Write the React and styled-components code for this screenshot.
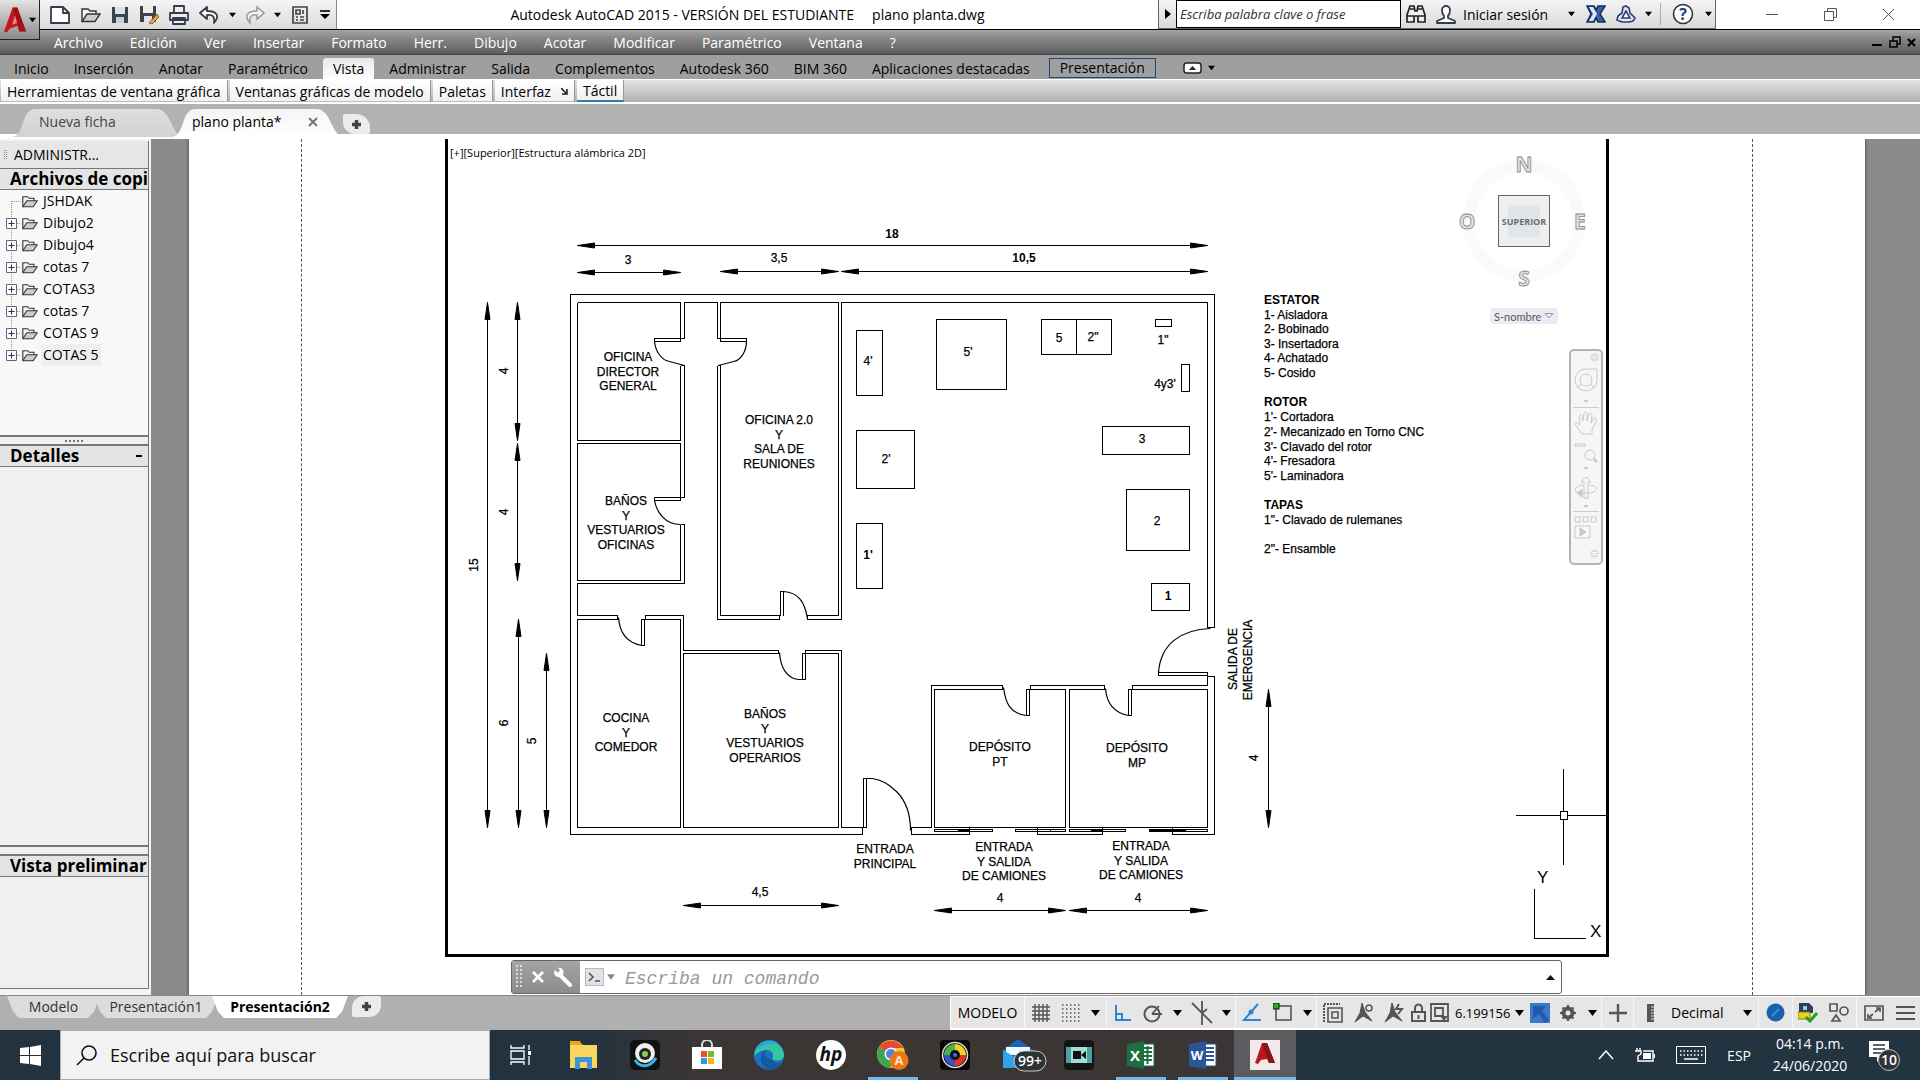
import React from "react";
import styled, { createGlobalStyle } from "styled-components";

const UI = `"Open Sans", "Noto Sans", sans-serif`;

const Global = createGlobalStyle`
  * { box-sizing: border-box; }
  body { margin: 0; font-family: ${UI}; font-size: 14px; color: #000; background: #b1b1b1; }
  button, input, select { font: inherit; color: inherit; margin: 0; padding: 0; border: 0; background: none; }
  svg { display: block; flex: none; }
`;

const Shell = styled.div`
  display: flex;
  flex-direction: column;
  min-height: 100vh;
`;

const Svg = ({ w, h = w, box, children, ...rest }) => (
  <svg width={w} height={h} viewBox={box || `0 0 ${w} ${h}`} fill="none" aria-hidden="true" {...rest}>{children}</svg>
);
const Caret = ({ c = "#000", w = 9 }) => (
  <Svg w={w} h={6} box="0 0 9 6"><path d="M0 0H9L4.500 6Z" fill={c} /></Svg>
);

/* ---------- title bar ---------- */
const TitleBar = styled.header`
  position: relative;
  display: flex;
  height: 30px;
  background: #fff;
  border-bottom: 1px solid #000;
`;
const AppButton = styled.button`
  position: absolute;
  left: 0;
  top: 0;
  z-index: 2;
  width: 40px;
  height: 40px;
  display: flex;
  align-items: center;
  justify-content: center;
  gap: 2px;
  background: linear-gradient(#e4e4e4, #8a8a8a);
  border-right: 1px solid #222;
  border-bottom: 1px solid #222;
`;
const QuickBar = styled.div`
  display: flex;
  align-items: center;
  width: 337px;
  padding-left: 44px;
  background: linear-gradient(#f4f4f4, #dcdcdc);
  border-right: 1px solid #888;
`;
const Tool = styled.button`
  display: flex;
  align-items: center;
  justify-content: center;
  width: ${p => p.$w || 31}px;
  height: 28px;
`;
const Title = styled.h1`
  flex: 1;
  display: flex;
  gap: 18px;
  align-items: center;
  justify-content: center;
  margin: 0;
  font-size: 14px;
  font-weight: 400;
  white-space: nowrap;
`;
const InfoCenter = styled.div`
  display: flex;
  align-items: center;
  background: linear-gradient(#f4f4f4, #dadada);
  border: solid #666;
  border-width: 0 1px 1px;
`;
const SearchInput = styled.input`
  width: 225px;
  height: 28px;
  padding: 0 3px;
  border: 1px solid #000;
  background: #fff;
  font-size: 13px;
  font-style: italic;
  &::placeholder { color: #333; opacity: 1; }
`;
const SignIn = styled.button`
  padding-left: 2px;
  width: 100px;
  text-align: left;
`;
const Divider = styled.span`
  width: 1px;
  height: 22px;
  margin: 0 4px;
  background: #aaa;
`;
const WinButtons = styled.div`
  display: flex;
  width: 204px;
  padding-left: 26px;
`;

/* ---------- menu and ribbon ---------- */
const MenuBar = styled.nav`
  display: flex;
  align-items: center;
  gap: 1px;
  height: 25px;
  padding: 0 2px 0 41px;
  background: linear-gradient(#a4a4a4, #848484 40%, #5c5c5c);
  border-bottom: 1px solid #444;
`;
const MenuItem = styled.button`
  padding: 0 13px;
  color: #fff;
`;
const Push = styled.span`flex: 1;`;
const Tabs = styled.nav`
  display: flex;
  align-items: flex-end;
  gap: 1px;
  height: 24px;
  padding-left: 2px;
  background: #9f9f9f;
`;
const RibbonTab = styled.button`
  height: ${p => (p.$on ? 21 : 20)}px;
  line-height: 20px;
  padding: 0 ${p => (p.$on ? 10 : 12)}px;
  margin: 0 ${p => (p.$on ? 2 : 0)}px;
  border-radius: 3px 3px 0 0;
  background: ${p => (p.$on ? "linear-gradient(#e8e8e8, #fff)" : "none")};
`;
const ContextTab = styled.button`
  height: 20px;
  line-height: 16px;
  padding: 0 10px;
  margin: 0 26px 1px 6px;
  border: 1px solid #1c4a7a;
`;
const Collapse = styled.button`
  display: flex;
  align-items: center;
  gap: 6px;
  height: 22px;
`;
const Ribbon = styled.div`
  display: flex;
  gap: 2px;
  height: 25px;
  padding: 0 1px;
  border-top: 1px solid #fff;
  border-bottom: 2px solid #fff;
  background: linear-gradient(#e4e4e4, #b0b0b0);
`;
const RibbonPanel = styled.button`
  display: flex;
  align-items: center;
  gap: 10px;
  height: 22px;
  padding: 1px 6px 0;
  background: linear-gradient(#fff, #f0f0f0);
  border-right: 1px solid #999;
  border-bottom: ${p => (p.$on ? "2px solid #3b7aa5" : "1px solid #bbb")};
`;
const FileTabs = styled.nav`
  display: flex;
  align-items: flex-end;
  height: 35px;
  padding: 0 0 2px 12px;
  background: linear-gradient(#b2b2b2 30px, #fff 30px);
`;
const FileTab = styled.button`
  position: relative;
  z-index: ${p => (p.$on ? 1 : 0)};
  display: flex;
  align-items: center;
  justify-content: space-between;
  width: 172px;
  height: 28px;
  padding: 0 ${p => (p.$on ? "26px 3px 20px" : "26px 3px 27px")};
  margin-right: -12px;
  color: ${p => (p.$on ? "#000" : "#444")};
  background: ${p => (p.$on ? "linear-gradient(#f4f4f4, #fff)" : "linear-gradient(#dedede, #d2d2d2)")};
  clip-path: path("M0 28C14 26 8 0 24 0H144C160 0 158 26 172 28Z");
`;
const NewTab = styled.button`
  display: flex;
  align-items: center;
  justify-content: center;
  width: 27px;
  height: 20px;
  margin: 0 0 3px 11px;
  background: #ececec;
  border-radius: 2px 14px 2px 12px;
`;

/* ---------- work area ---------- */
const Work = styled.main`
  flex: 1;
  display: flex;
  background: #f4f4f4;
`;
const Side = styled.aside`
  display: flex;
  flex-direction: column;
  width: 149px;
  margin: 2px 2px 6px 0;
  border-right: 1px solid #777;
  border-bottom: 1px solid #777;
  background: #f0f0f0;
`;
const PaletteTitle = styled.div`
  display: flex;
  align-items: center;
  gap: 7px;
  height: 27px;
  padding-left: 4px;
  background: #e6e6e6;
`;
const SideHead = styled.h2`
  display: flex;
  align-items: center;
  justify-content: space-between;
  height: 22px;
  margin: 0;
  padding: 0 0 0 10px;
  border: solid #777;
  border-width: 1px 0;
  background: #e4e4e4;
  font-size: 17px;
  line-height: 20px;
  white-space: nowrap;
`;
const Dash = styled.span`
  width: 6px;
  height: 2px;
  margin-right: 6px;
  background: #000;
`;
const TreeList = styled.ul`
  height: 245px;
  margin: 0;
  padding: 0 0 0 6px;
  list-style: none;
  background: #f8f8f8;
`;
const TreeItem = styled.li`
  display: flex;
  align-items: center;
  height: 22px;
`;
const TreeLabel = styled.span`
  padding: 0 2px;
  margin-left: 3px;
  line-height: 22px;
  background: ${p => (p.$on ? "#efefef" : "none")};
`;
const Splitter = styled.div`
  display: flex;
  align-items: center;
  justify-content: center;
  height: 10px;
  border: solid #777;
  border-width: 2px 0 1px;
`;
const Fill = styled.div`
  flex: ${p => (p.$h ? `0 0 ${p.$h}px` : 1)};
`;
const Canvas = styled.section`
  position: relative;
  flex: 1;
  display: flex;
  padding: 0 55px 0 38px;
  background: #8a8a8a;
`;
const Paper = styled.div`
  flex: 1;
  display: flex;
  padding: 0 112px;
  background: #fff;
  box-shadow: 0 0 3px #333;
  clip-path: inset(0 -4px);
`;
const Margins = styled.div`
  flex: 1;
  display: flex;
  padding: 0 143px 38px;
  border: dashed #555;
  border-width: 0 1px;
`;
const Viewport = styled.div`
  position: relative;
  flex: 1;
  display: flex;
  border: solid #000;
  border-width: 0 3px 3px;
`;
const Plan = styled.svg`
  flex: 1;
  width: 100%;
  height: 100%;
  font-family: "Liberation Sans", Arial, sans-serif;
  font-size: 12px;
`;
const ViewLabel = styled.div`
  position: absolute;
  left: 2px;
  top: 5px;
  display: flex;
  font-size: 11px;
  line-height: 18px;
`;
const ViewCube = styled.div`
  position: absolute;
  right: 12px;
  top: 12px;
  display: flex;
  flex-direction: column;
  align-items: center;
  gap: 17px;
`;
const UcsPick = styled.label`
  display: flex;
  align-items: center;
  width: 68px;
  height: 16px;
  padding: 0 4px;
  border-radius: 4px;
  background: #ebebf5;
  select { appearance: none; width: 50px; font: 11px Lato, sans-serif; color: #555; }
`;
const NavBar = styled.div`
  position: absolute;
  right: 3px;
  top: 210px;
  display: flex;
  flex-direction: column;
  align-items: center;
  width: 34px;
  height: 216px;
  border: 2px solid #b4b4b4;
  border-radius: 5px;
  background: #f6f6f6;
`;
const NavBtn = styled.button`
  display: flex;
  align-items: center;
  justify-content: center;
  width: 26px;
  height: ${p => p.$h}px;
  border-top: ${p => (p.$line ? "1px solid #ccc" : "0")};
`;
const NavEnd = styled(NavBtn)`
  align-self: flex-end;
  width: 14px;
`;
const CommandLine = styled.form`
  position: absolute;
  left: 360px;
  right: 358px;
  bottom: 1px;
  display: flex;
  height: 34px;
  border: 1px solid #666;
  border-radius: 3px;
  background: #fff;
`;
const CommandTools = styled.div`
  display: flex;
  align-items: center;
  gap: 9px;
  width: 68px;
  padding-left: 4px;
  background: linear-gradient(#a4a4a4, #8c8c8c);
`;
const Prompt = styled.button`
  display: flex;
  align-items: center;
  gap: 3px;
  padding: 0 10px 0 5px;
`;
const CommandInput = styled.input`
  flex: 1;
  min-width: 0;
  padding-top: 3px;
  font: italic 18px "Liberation Mono", monospace;
  &::placeholder { color: #999; opacity: 1; }
`;
const History = styled.button`
  width: 22px;
  display: flex;
  align-items: center;
  justify-content: center;
`;

/* ---------- status bar ---------- */
const StatusBar = styled.footer`
  display: flex;
  justify-content: space-between;
  height: 35px;
  background: #b0b0b0;
  border-top: 1px solid #888;
`;
const LayoutTabs = styled.nav`
  display: flex;
  padding-left: 7px;
`;
const LayoutTab = styled.button`
  width: ${p => p.$w}px;
  height: 22px;
  margin-right: -6px;
  line-height: 20px;
  font-size: 14px;
  font-weight: ${p => (p.$on ? 700 : 400)};
  color: ${p => (p.$on ? "#000" : "#333")};
  background: ${p => (p.$on ? "#fff" : "#dcdcdc")};
  clip-path: polygon(0 0, 100% 0, calc(100% - 6px) 70%, calc(100% - 12px) 100%, 12px 100%, 6px 70%);
`;
const AddLayout = styled.button`
  display: flex;
  align-items: center;
  justify-content: center;
  width: 29px;
  height: 21px;
  margin-left: 10px;
  background: #ececec;
  border-radius: 12px 2px 12px 2px;
`;
const StatusTools = styled.div`
  display: flex;
  height: 34px;
  background: #e6e6e6;
  border: solid #fff;
  border-width: 1px 0 2px 1px;
`;
const StatusBtn = styled.button`
  display: flex;
  align-items: center;
  justify-content: center;
  width: ${p => p.$w}px;
  border-right: ${p => (p.$sep ? "1px solid #f6f6f6" : "0")};
`;
const StatusPick = styled.label`
  display: flex;
  align-items: center;
  width: ${p => p.$w}px;
  padding: 0 ${p => p.$pad}px 0 4px;
  font-size: ${p => p.$size}px;
  border-right: ${p => (p.$sep ? "1px solid #f6f6f6" : "0")};
  select { appearance: none; flex: 1; min-width: 0; }
`;

/* ---------- taskbar ---------- */
const Taskbar = styled.div`
  display: flex;
  height: 50px;
  color: #fff;
  background: linear-gradient(90deg, #22323f 30%, #3b3534 36%, #3b3534 64%, #233441 68%);
`;
const Start = styled.button`
  display: flex;
  align-items: center;
  justify-content: center;
  width: 60px;
`;
const TaskSearch = styled.label`
  display: flex;
  align-items: center;
  gap: 13px;
  width: 430px;
  padding-left: 15px;
  border: 1px solid #aaa;
  background: #f2f2f2;
  color: #000;
  input { flex: 1; min-width: 0; font-size: 18px; }
  input::placeholder { color: #111; opacity: 1; }
`;
const TaskApp = styled.button`
  display: flex;
  align-items: center;
  justify-content: center;
  width: 62px;
  background: ${p => (p.$active ? "#5c5c60" : "none")};
  background-image: ${p => (p.$open ? "linear-gradient(#76b9ed, #76b9ed)" : "none")};
  background-size: ${p => (p.$active ? 62 : 50)}px 3px;
  background-position: center bottom;
  background-repeat: no-repeat;
`;
const Tray = styled.div`
  display: flex;
  align-items: center;
  gap: 21px;
  margin-left: auto;
  padding-right: 19px;
`;
const TrayBtn = styled.button`
  display: flex;
`;
const Clock = styled.button`
  width: 76px;
  text-align: center;
  font-size: 14px;
  line-height: 22px;
`;

/* ---------- icon drawings ---------- */
const S = { stroke: "#333c4a", strokeWidth: 1.8, strokeLinejoin: "round" };
const Folder = ({ w = 20, h = 16 }) => (
  <Svg w={w} h={h} box="0 0 20 16">
    <path d="M1 14V2H7L9 4H15V7" fill="#f4f4f4" stroke="#333" strokeWidth="1.400" />
    <path d="M1 14.500L6 7H19L14 14.500Z" fill="#c9ccd2" stroke="#333" strokeWidth="1.400" />
  </Svg>
);
const Acad = ({ w = 24, h = 30 }) => (
  <Svg w={w} h={h} box="0 0 24 30">
    <path d="M9 2H14L23 27H16L14 21L6 24L3 28L0 27Z" fill="#c4161c" />
    <path d="M11.500 10L14 18L8.500 20Z" fill="#d98a8a" />
    <path d="M14 2L23 27H16L11.500 10L9 2Z" fill="#8e0f14" opacity=".6" />
  </Svg>
);
const Plus = () => <Svg w={11}><path d="M5.500 1V10M1 5.500H10" stroke="#444" strokeWidth="3.500" /></Svg>;

/* ---------- floor plan ---------- */
const WALLS = [
  "M1214 627V294H570V834H862V827M841 827H863M863 827V778H866V827H863",
  "M577 302H680V338M680 365V440H577V302M684 338V302H717V338M720 341V302H838V615H807V619H841V302H1207V627H1214",
  "M680 338V341H654V338H684M717 338H746V341H720",
  "M680 500V443H577V580H680V524M684 365V496M684 497H654V500H680M684 524V583H577V615H617V619H577V827H680V619H645V615H683V650H778V653H683V827H838V653H805V650H841V827",
  "M641 619V645H644V619Z", "M680 365H684M680 524H684M717 365H720",
  "M717 365V619H779V615H720V365", "M780 615V591H783V615",
  "M802 653V679H805V653Z",
  "M911 834V827H931V685H1002V689H934V827H969V834H911M1030 689V685H1104V689H1069V827H1102V834H1037V827H1065V689H1030",
  "M1026 689V715H1029V689Z", "M1128 689V715H1131V689Z",
  "M1132 689V685H1207V672H1158V675H1207M1132 689H1207V827H1172V834H1214V676H1207",
  "M934 827H1065M1069 827H1207",
  "M934 829H992V831H934ZM957 830H969M1015 829H1065V831H1015ZM1050 829V831M1069 829H1125V831H1069ZM1090 830H1102M1149 829H1185V831H1149ZM1149 830H1185M1185 829H1207V831H1185",
];
const ARCS = [
  "M654 341C655 352 662 360 669 361L684 365", "M746 341C746 351 740 360 733 361L718 365",
  "M654 500C656 511 664 524 680 524", "M618 617C619 632 626 642 641 645",
  "M779 652C780 668 787 678 798 679H802", "M783 591C797 592 804 600 807 618",
  "M866 778H872C884 780 889 785 896 791C906 801 910 815 910 830",
  "M1003 687C1005 702 1009 713 1026 715", "M1105 688C1106 701 1112 712 1128 715",
  "M1210 628C1180 629 1160 644 1158 672",
];
const MACHINES = [
  [856, 330, 26, 65], [856, 430, 58, 58], [856, 523, 26, 65], [936, 319, 70, 70],
  [1041, 319, 35, 35], [1076, 319, 35, 35], [1155, 319, 16, 7], [1181, 364, 8, 27],
  [1102, 426, 87, 28], [1126, 489, 63, 61], [1151, 583, 38, 27],
];
const DIMS_H = [[577, 1207, 245], [577, 680, 272], [720, 838, 271], [841, 1207, 271], [683, 838, 905], [934, 1065, 910], [1069, 1207, 910]];
const DIMS_V = [[302, 827, 487], [302, 440, 517], [443, 580, 517], [619, 827, 518], [653, 827, 546], [689, 827, 1268]];
const ROOMS = [
  [628, 361, ["OFICINA", "DIRECTOR", "GENERAL"]],
  [779, 424, ["OFICINA 2.0", "Y", "SALA DE", "REUNIONES"]],
  [626, 505, ["BAÑOS", "Y", "VESTUARIOS", "OFICINAS"]],
  [626, 722, ["COCINA", "Y", "COMEDOR"]],
  [765, 718, ["BAÑOS", "Y", "VESTUARIOS", "OPERARIOS"]],
  [1000, 751, ["DEPÓSITO", "PT"]],
  [1137, 752, ["DEPÓSITO", "MP"]],
  [885, 853, ["ENTRADA", "PRINCIPAL"]],
  [1004, 851, ["ENTRADA", "Y SALIDA", "DE CAMIONES"]],
  [1141, 850, ["ENTRADA", "Y SALIDA", "DE CAMIONES"]],
];
const MARKS = [
  [628, 264, "3"], [779, 262, "3,5"], [760, 896, "4,5"], [1000, 902, "4"], [1138, 902, "4"],
  [968, 356, "5'"], [868, 365, "4'"], [886, 463, "2'"], [1059, 342, "5"], [1093, 341, "2\""],
  [1163, 344, "1\""], [1165, 388, "4y3'"], [1142, 443, "3"], [1157, 525, "2"],
];
const BOLD_MARKS = [[892, 238, "18"], [1024, 262, "10,5"], [868, 559, "1'"], [1168, 600, "1"]];
const TURNED = [[478, 565, "15"], [508, 371, "4"], [508, 512, "4"], [508, 723, "6"], [536, 741, "5"], [1258, 758, "4"], [1237, 659, "SALIDA DE"], [1252, 660, "EMERGENCIA"]];
const LEGEND = [
  [304, "ESTATOR", 1], [319, "1- Aisladora"], [333, "2- Bobinado"], [348, "3- Insertadora"], [362, "4- Achatado"], [377, "5- Cosido"],
  [406, "ROTOR", 1], [421, "1'- Cortadora"], [436, "2'- Mecanizado en Torno CNC"], [451, "3'- Clavado del rotor"], [465, "4'- Fresadora"], [480, "5'- Laminadora"],
  [509, "TAPAS", 1], [524, "1\"- Clavado de rulemanes"], [553, "2\"- Ensamble"],
];

const FloorPlan = () => (
  <Plan viewBox="448 139 1158 815" role="img" aria-label="Plano de planta">
    <g transform="translate(.5 .5)" fill="none" stroke="#000">
      <g shapeRendering="crispEdges">
        {WALLS.map(d => <path key={d} d={d} />)}
        {MACHINES.map(([x, y, w, h]) => <rect key={`${x}-${y}`} x={x} y={y} width={w} height={h} />)}
        <path d="M1515 815H1560M1567 815H1605M1563 768V811M1563 819V864M1560 811H1567V819H1560Z" />
        <path d="M1534 888V938H1585" />
      </g>
      {ARCS.map(d => <path key={d} d={d} strokeWidth="1.200" />)}
      {DIMS_H.map(([a, b, y]) => (
        <path key={`${a}${y}`} fill="#000" strokeWidth="1" d={`M${a} ${y}H${b}M${a} ${y}l17 -2.500v5zM${b} ${y}l-17 -2.500v5z`} />
      ))}
      {DIMS_V.map(([a, b, x]) => (
        <path key={`${a}${x}`} fill="#000" strokeWidth="1" d={`M${x} ${a}V${b}M${x} ${a}l-2.500 17h5zM${x} ${b}l-2.500 -17h5z`} />
      ))}
    </g>
    <g textAnchor="middle" stroke="#000" strokeWidth=".25">
      {ROOMS.map(([x, y, lines]) => (
        <text key={`${x}-${y}`} y={y}>
          {lines.map((t, i) => <tspan key={t} x={x} y={Math.round(y + i * 14.7)}>{t}</tspan>)}
        </text>
      ))}
      {MARKS.map(([x, y, t]) => <text key={`${x}-${y}`} x={x} y={y}>{t}</text>)}
      {BOLD_MARKS.map(([x, y, t]) => <text key={`${x}-${y}`} x={x} y={y} fontWeight="700" stroke="none">{t}</text>)}
      {TURNED.map(([x, y, t]) => <text key={`${x}-${y}`} transform={`translate(${x} ${y}) rotate(-90)`}>{t}</text>)}
    </g>
    {LEGEND.map(([y, t, b]) => <text key={t} x="1264" y={y} fontWeight={b ? 700 : 400} stroke="#000" strokeWidth={b ? 0 : 0.25}>{t}</text>)}
    <text x="1537" y="883" fontSize="17">Y</text>
    <text x="1590" y="937" fontSize="17">X</text>
  </Plan>
);

const Compass = () => (
  <Svg w={140} h={140}>
    <circle cx="70" cy="70" r="55" stroke="#fafafa" strokeWidth="12" />
    <rect x="44.500" y="44.500" width="51" height="51" fill="#efefef" stroke="#666" />
    <rect x="54" y="54" width="32" height="32" fill="#e1e4e9" />
    <g fontFamily="Open Sans, sans-serif" fontWeight="700" textAnchor="middle">
      <text x="70" y="74" fontSize="9" fill="#6a6e75">SUPERIOR</text>
      <g fontSize="21" fill="#e2e2e2" stroke="#888" strokeWidth=".8">
        <text x="70" y="21">N</text>
        <text x="70" y="135">S</text>
        <text x="13" y="78">O</text>
        <text x="126" y="78">E</text>
      </g>
    </g>
  </Svg>
);

const N = "#c8c8c8";
const NavCaret = <Svg w={6} h={4}><path d="M0 0H6L3 3Z" fill={N} /></Svg>;
const NAV = [
  ["Rueda de navegación", 34, 0, <Svg w={24} stroke={N}><path d="M12 1H23V12A11 11 0 1 1 12 1Z" /><circle cx="12" cy="12" r="6" /><path d="M7 16L4 20M17 16L20 20" /></Svg>],
  ["Más ruedas", 10, 0, NavCaret],
  ["Encuadre", 32, 1, <Svg w={24} stroke={N}><path d="M8 23L1 13C2 11 4 12 6 14L5 5C6 3 8 4 8 6L9 10L10 2C11 0 13 1 13 3V10L15 3C17 1 18 3 18 5L17 12L20 7C22 6 23 8 22 10L18 19V23Z" /></Svg>],
  ["Zoom", 28, 0, <Svg w={24} stroke={N}><path d="M1 4H11V6H1Z" /><circle cx="16" cy="15" r="5" /><path d="M20 19L23 22" strokeWidth="2.500" /></Svg>],
  ["Más zoom", 8, 0, NavCaret],
  ["Órbita", 30, 0, <Svg w={24} stroke={N}><path d="M10 22V6H7L12 1L17 6H14V22Z" /><path d="M9 9C-2 11 -1 17 8 17L16 17C25 15 25 10 15 9" /><path d="M3 17L8 13V21Z" fill={N} /></Svg>],
  ["Más órbita", 9, 0, NavCaret],
  ["ShowMotion", 33, 1, <Svg w={24} stroke={N}><path d="M1 1H6V6H1ZM9 1H14V6H9ZM17 1H22V6H17ZM1 10H16V22H1Z" /><path d="M6 12V20L12 16Z" fill={N} /></Svg>],
];

const G = "#555";
const STATUS_A = [
  ["Rejilla", 31, 0, <Svg w={18}><path d="M3 0V18M7 0V18M11 0V18M15 0V18M0 3H18M0 7H18M0 11H18M0 15H18" stroke={G} strokeWidth="1.400" /></Svg>],
  ["Forzado", 29, 0, <Svg w={18}><path d="M0 1H18M0 5H18M0 9H18M0 13H18M0 17H18" stroke={G} strokeWidth="1.500" strokeDasharray="1.500 2.500" /></Svg>],
  ["Opciones de forzado", 22, 1, <Caret />],
  ["Orto", 31, 0, <Svg w={18}><path d="M2 1V16H17M2 10H8V16" stroke="#2a86d8" strokeWidth="2" /></Svg>],
  ["Rastreo polar", 30, 0, <Svg w={20}><circle cx="9" cy="11" r="7.500" stroke={G} strokeWidth="2" /><path d="M9 11H19M9 11L16 3" stroke={G} strokeWidth="1.800" /></Svg>],
  ["Opciones polares", 18, 0, <Caret />],
  ["Isométrico", 32, 0, <Svg w={22} h={24}><path d="M1 2L21 22M11 0V24M11 12L16 8" stroke={G} strokeWidth="1.800" /></Svg>],
  ["Opciones isométricas", 18, 1, <Caret />],
  ["Rastreo", 32, 0, <Svg w={20}><path d="M16 1L2 17H19" stroke="#2a86d8" strokeWidth="2" /><circle cx="9" cy="9" r="2.500" fill="#2a86d8" /></Svg>],
  ["Referencia", 30, 0, <Svg w={20}><rect x="3" y="3" width="15" height="14" stroke={G} strokeWidth="1.600" /><rect x="0" y="0" width="6" height="6" fill="#1db51d" stroke="#111" /></Svg>],
  ["Opciones de referencia", 19, 1, <Caret />],
  ["Espacio", 32, 0, <Svg w={20}><path d="M1 19V1H17" stroke={G} strokeWidth="2" strokeDasharray="2 1" /><path d="M5 5H19V19H5ZM9 9H15V15H9Z" stroke={G} strokeWidth="1.600" /></Svg>],
  ["Anotación", 30, 0, <Svg w={20}><path d="M8 0L11 9L18 18L9 13L1 19L6 10Z" fill={G} stroke={G} /><circle cx="15" cy="5" r="3" stroke={G} strokeWidth="1.500" /></Svg>],
  ["Escala automática", 30, 0, <Svg w={20}><path d="M8 0L11 9L18 18L9 13L1 19L6 10Z" fill={G} stroke={G} /><path d="M15 1L12 6H18L14 11" stroke={G} strokeWidth="2" /></Svg>],
  ["Bloqueo", 19, 0, <Svg w={15} h={19}><path d="M4 9V5A3.500 3.500 0 0 1 11 5V9" stroke={G} strokeWidth="2" /><path d="M1 9H14V18H1ZM7.500 12V16" stroke={G} strokeWidth="2" /></Svg>],
  ["Ventana gráfica", 23, 0, <Svg w={19}><path d="M1 1H18V18H1ZM5 5H13V13H5Z" stroke={G} strokeWidth="1.800" /><path d="M10 13H18L14 18Z" fill={G} /></Svg>],
];

const TASKS = [
  ["Vista de tareas", <Svg w={22}><path d="M1 1V4H14V1M1 21V18H14V21M1 7H14V15H1ZM19 1V6M19 12V21" stroke="#fff" strokeWidth="1.300" /><path d="M18 7H21V11H18Z" fill="#fff" /></Svg>],
  ["Explorador", <Svg w={29} h={28}><path d="M1 2H11L14 4H28V27H1Z" fill="#f9d65f" /><path d="M1 0H11L13 4H1Z" fill="#e9a81c" /><path d="M6 28V16H23V28H18V21H11V28Z" fill="#3b94dc" /></Svg>],
  ["Cámara", <Svg w={30}><rect width="30" height="30" rx="5" fill="#111" /><path d="M5 20C10 28 20 28 26 18" stroke="#35b4e8" strokeWidth="3" /><circle cx="15" cy="13" r="10" fill="#eee" /><circle cx="15" cy="14" r="6" fill="#222" /><circle cx="15" cy="14" r="3" fill="#7ad45a" /></Svg>],
  ["Microsoft Store", <Svg w={30}><path d="M10 9V5A5 5 0 0 1 20 5V9" stroke="#ddd" strokeWidth="2" /><path d="M0 7H30V29H0Z" fill="#fff" /><path d="M9 11H15V17H9Z" fill="#e8502a" /><path d="M16 11H22V17H16Z" fill="#7cb82f" /><path d="M9 18H15V24H9Z" fill="#2a9be0" /><path d="M16 18H22V24H16Z" fill="#f5b51c" /></Svg>],
  ["Edge", <Svg w={30}><circle cx="15" cy="15" r="15" fill="#1b72c4" /><path d="M1 11A15 15 0 0 1 30 15C30 21 22 22 18 19C21 15 18 10 12 10C6 10 2 14 0 17Z" fill="#38c3a4" /><path d="M1 11A15 15 0 0 1 25 4C17 3 6 5 1 11Z" fill="#2aa8dd" /><path d="M18 19C12 19 9 15 12 10C5 12 4 26 15 30C23 30 27 25 28 22C24 24 20 23 18 19Z" fill="#155a9e" /></Svg>],
  ["HP", <Svg w={30}><circle cx="15" cy="15" r="15" fill="#fff" /><text x="15" y="21" textAnchor="middle" fontFamily="Open Sans, sans-serif" fontSize="19" fontStyle="italic" fontWeight="700" fill="#111">hp</text></Svg>],
  ["Chrome", <Svg w={32} h={30}><circle cx="14" cy="14" r="14" fill="#f6c52c" /><path d="M14 14L2 7A14 14 0 0 1 26 8H14Z" fill="#e2483b" /><path d="M2 7A14 14 0 0 0 13 28L19 17L14 14Z" fill="#3aa457" /><circle cx="14" cy="14" r="6.500" fill="#fff" /><circle cx="14" cy="14" r="5" fill="#4a86e8" /><circle cx="22" cy="20.500" r="9.500" fill="#ee7414" /><text x="22" y="25" textAnchor="middle" fontFamily="Open Sans, sans-serif" fontSize="13" fontWeight="700" fill="#fbe3cc">A</text></Svg>, 1],
  ["Color", <Svg w={30}><rect width="30" height="30" rx="4" fill="#080808" /><circle cx="15" cy="15" r="12.500" stroke="#ddd" strokeWidth="1.500" /><path d="M15 4A11 11 0 0 1 26 15H15Z" fill="#f2d21f" /><path d="M26 15A11 11 0 0 1 15 26V15Z" fill="#e2352a" /><path d="M15 26A11 11 0 0 1 4 15H15Z" fill="#3a4fd0" /><path d="M4 15A11 11 0 0 1 15 4V15Z" fill="#47b548" /><circle cx="15" cy="15" r="5" fill="#111" /><circle cx="15" cy="15" r="2" fill="#3d78d8" /></Svg>],
  ["Correo", <Svg w={60} h={34}><path d="M16 12L31 1L46 12V28H16Z" fill="#1a65b4" /><path d="M19 9H43V17H19Z" fill="#f2f8ff" /><path d="M16 12L31 21L46 12V30H16Z" fill="#2fa4ea" /><rect x="27" y="13" width="32" height="20" rx="10" fill="#2d3337" stroke="#ccc" /><text x="43" y="28" textAnchor="middle" fontFamily="Open Sans, sans-serif" fontSize="14" fontWeight="600" fill="#fff">99+</text></Svg>],
  ["Vídeo", <Svg w={30}><rect width="30" height="30" rx="4" fill="#141414" /><path d="M2 7H28V23H2Z" fill="#4f9f9c" /><path d="M7 7H23V23H7Z" fill="#9fe0d6" /><path d="M9 11H17V19H9ZM17 15L22 11V19Z" fill="#111" /></Svg>],
  ["Excel", <Svg w={28}><path d="M12 3H27V25H12Z" fill="#fff" stroke="#1e6f42" /><path d="M16 7H25M16 11H25M16 15H25M16 19H25M20.500 5V23" stroke="#1e6f42" strokeWidth="2" /><path d="M0 3L17 0V28L0 25Z" fill="#1d6f42" /><text x="8" y="20" textAnchor="middle" fontFamily="Open Sans, sans-serif" fontSize="15" fontWeight="700" fill="#fff">X</text></Svg>, 1],
  ["Word", <Svg w={28}><path d="M12 3H27V25H12Z" fill="#fff" stroke="#2a5699" /><path d="M17 7H25M17 11H25M17 15H25M17 19H25" stroke="#2a5699" strokeWidth="2" /><path d="M0 3L17 0V28L0 25Z" fill="#2a5699" /><text x="8" y="19" textAnchor="middle" fontFamily="Open Sans, sans-serif" fontSize="13" fontWeight="700" fill="#fff">W</text></Svg>, 1],
  ["AutoCAD", <Svg w={30}><path d="M0 0H30V30H0Z" fill="#f4e9ea" /><path d="M12 3H17L25 23H19L17 19L11 20L8 24L5 23Z" fill="#b81a22" /><path d="M17 3L25 23H19L12 3Z" fill="#8d1119" /></Svg>, 1, 1],
];

export default function App() {
  return (
    <Shell>
      <Global />
      <TitleBar>
        <AppButton aria-label="Menú de la aplicación"><Acad w={23} h={30} /><Caret w={7} /></AppButton>
        <QuickBar>
          <Tool aria-label="Nuevo"><Svg w={20}><path d="M1 2H13L19 8V18H1Z" fill="#fff" {...S} /><path d="M13 2V8H19" {...S} /></Svg></Tool>
          <Tool aria-label="Abrir"><Folder /></Tool>
          <Tool $w={28} aria-label="Guardar"><Svg w={18}><path d="M1 1H17V17H1Z" fill="#3a4350" /><path d="M4 1H14V8H4Z" fill="#dfe3e8" /><path d="M5 11H13V17H5Z" fill="#c9ced5" /></Svg></Tool>
          <Tool $w={30} aria-label="Guardar como"><Svg w={20}><path d="M1 1H17V17H1Z" fill="#3a4350" /><path d="M4 1H14V8H4Z" fill="#eee" /><path d="M5 11H13V17H5Z" fill="#dfe3e8" /><path d="M10 18L18 9L20 12L13 19Z" fill="#e8a33c" stroke="#7a4a10" strokeWidth=".8" /></Svg></Tool>
          <Tool $w={30} aria-label="Imprimir"><Svg w={20}><path d="M5 7V1H15V7M1 8H19V15H1ZM4 13H16V19H4Z" fill="#eee" {...S} /></Svg></Tool>
          <Tool $w={30} aria-label="Deshacer"><Svg w={20}><path d="M8 2L1 8L8 14V10C14 9 16 12 15 18C21 11 18 6 8 6Z" fill="#fff" {...S} /></Svg></Tool>
          <Tool $w={16} aria-label="Lista de deshacer"><Caret w={7} /></Tool>
          <Tool $w={30} aria-label="Rehacer"><Svg w={20}><path d="M12 2L19 8L12 14V10C6 9 4 12 5 18C-1 11 2 6 12 6Z" fill="#f4f4f4" stroke="#999" strokeWidth="1.500" /></Svg></Tool>
          <Tool $w={15} aria-label="Lista de rehacer"><Caret w={7} /></Tool>
          <Tool $w={30} aria-label="Propiedades"><Svg w={16} h={18}><path d="M1 1H15V17H1ZM4 4H8V8H4ZM11 4V8M4 11H6M4 14H6M8 11H12M8 14H12" stroke="#444" strokeWidth="1.700" /></Svg></Tool>
          <Tool $w={20} aria-label="Personalizar"><Svg w={10} h={10}><path d="M0 1H10" stroke="#000" strokeWidth="1.600" /><path d="M0 4H10L5 9Z" fill="#000" /></Svg></Tool>
        </QuickBar>
        <Title><span>Autodesk AutoCAD 2015 - VERSIÓN DEL ESTUDIANTE</span><span>plano planta.dwg</span></Title>
        <InfoCenter>
          <Tool $w={17} aria-label="Contraer búsqueda"><Svg w={6} h={10}><path d="M0 0L6 5L0 10Z" fill="#000" /></Svg></Tool>
          <SearchInput aria-label="Buscar en la ayuda" placeholder="Escriba palabra clave o frase" />
          <Tool $w={30} aria-label="Buscar"><Svg w={20}><path d="M1 18V11L4 2H8L9 7H11L12 2H16L19 11V18H12V12H8V18ZM1 12H8M12 12H19M4 5H8M12 5H16" fill="#eee" stroke="#222" strokeWidth="1.700" /></Svg></Tool>
          <Tool $w={30} aria-label="Usuario"><Svg w={20}><path d="M6 6A4 4 0 0 1 14 6C14 9 13 11 12 12V14L19 17V19H1V17L8 14V12C7 11 6 9 6 6Z" fill="#fff" {...S} /></Svg></Tool>
          <SignIn>Iniciar sesión</SignIn>
          <Tool $w={20} aria-label="Opciones de sesión"><Caret w={7} /></Tool>
          <Tool $w={30} aria-label="Exchange"><Svg w={20} h={18}><path d="M1 1H8L10 5L12 1H19L14 9L19 17H12L10 13L8 17H1L5 9Z" fill="#3a5fae" stroke="#1c2c5c" strokeWidth="1.600" /><path d="M3 2H7L11 9L7 16H3L7 9Z" fill="#dfe6f5" /></Svg></Tool>
          <Tool $w={30} aria-label="Autodesk 360"><Svg w={20} h={18}><path d="M7 2L10 1L13 3L14 8L19 13L17 16L13 17H6L1 15L2 11L6 8Z" fill="#e6ebf5" stroke="#2c3d70" strokeWidth="1.600" /><path d="M10 6L6 13H14Z" fill="#fff" stroke="#2c3d70" strokeWidth="1.600" /></Svg></Tool>
          <Tool $w={15} aria-label="Opciones"><Caret w={7} /></Tool>
          <Divider />
          <Tool $w={36} aria-label="Ayuda"><Svg w={22}><circle cx="11" cy="11" r="9.500" fill="#fff" stroke="#333" strokeWidth="1.600" /><text x="11" y="17" textAnchor="middle" fontFamily="Open Sans, sans-serif" fontSize="16" fontWeight="700" fill="#1c3f8c">?</text></Svg></Tool>
          <Tool $w={14} aria-label="Más ayuda"><Caret w={7} /></Tool>
        </InfoCenter>
        <WinButtons>
          <Tool $w={60} aria-label="Minimizar"><Svg w={12}><path d="M0 6.500H12" stroke="#555" /></Svg></Tool>
          <Tool $w={56} aria-label="Restaurar"><Svg w={13}><path d="M.5 3.500H9.500V12.500H.5ZM3.500 3V.5H12.500V9.500H10" stroke="#555" /></Svg></Tool>
          <Tool $w={60} aria-label="Cerrar"><Svg w={13}><path d="M1 1L12 12M12 1L1 12" stroke="#555" /></Svg></Tool>
        </WinButtons>
      </TitleBar>

      <MenuBar aria-label="Menú">
        {["Archivo", "Edición", "Ver", "Insertar", "Formato", "Herr.", "Dibujo", "Acotar", "Modificar", "Paramétrico", "Ventana", "?"].map(t => <MenuItem key={t}>{t}</MenuItem>)}
        <Push />
        <Tool $w={16} aria-label="Minimizar dibujo"><Svg w={10}><path d="M0 8H10" stroke="#000" strokeWidth="2" /></Svg></Tool>
        <Tool $w={17} aria-label="Restaurar dibujo"><Svg w={12}><path d="M1 5H8V11H1ZM4 5V1H11V8H8" stroke="#000" strokeWidth="1.500" /></Svg></Tool>
        <Tool $w={14} aria-label="Cerrar dibujo"><Svg w={9}><path d="M1 1L8 8M8 1L1 8" stroke="#000" strokeWidth="2.200" /></Svg></Tool>
      </MenuBar>

      <Tabs aria-label="Cinta de opciones">
        {["Inicio", "Inserción", "Anotar", "Paramétrico", "Vista", "Administrar", "Salida", "Complementos", "Autodesk 360", "BIM 360", "Aplicaciones destacadas"].map(t => (
          <RibbonTab key={t} $on={t === "Vista"}>{t}</RibbonTab>
        ))}
        <ContextTab>Presentación</ContextTab>
        <Collapse aria-label="Contraer cinta">
          <Svg w={19} h={12}><rect x="1" y="1" width="17" height="10" rx="2.500" fill="#fff" stroke="#222" strokeWidth="1.500" /><path d="M6 8H13L9.500 4Z" fill="#222" /></Svg>
          <Caret w={7} />
        </Collapse>
      </Tabs>
      <Ribbon>
        <RibbonPanel>Herramientas de ventana gráfica</RibbonPanel>
        <RibbonPanel>Ventanas gráficas de modelo</RibbonPanel>
        <RibbonPanel>Paletas</RibbonPanel>
        <RibbonPanel>Interfaz<Svg w={7}><path d="M0 0L5 5M6 1V6H1" stroke="#222" strokeWidth="1.600" /></Svg></RibbonPanel>
        <RibbonPanel $on>Táctil</RibbonPanel>
      </Ribbon>

      <FileTabs aria-label="Archivos abiertos">
        <FileTab>Nueva ficha</FileTab>
        <FileTab $on>plano planta*<Svg w={10}><path d="M1 1L9 9M9 1L1 9" stroke="#777" strokeWidth="2" /></Svg></FileTab>
        <NewTab aria-label="Nuevo dibujo"><Plus /></NewTab>
      </FileTabs>

      <Work>
        <Side>
          <PaletteTitle><Svg w={3} h={10}><path d="M.5 0V10M2.500 0V10" stroke="#888" strokeDasharray="1 1" /></Svg>ADMINISTR...</PaletteTitle>
          <SideHead>Archivos de copi</SideHead>
          <TreeList>
            {["JSHDAK", "Dibujo2", "Dibujo4", "cotas 7", "COTAS3", "cotas 7", "COTAS 9", "COTAS 5"].map((t, i) => (
              <TreeItem key={i}>
                <Svg w={16} h={22}>
                  <path d={i === 0 ? "M5.500 11V22M6 11.500H15" : i === 7 ? "M5.500 0V6M11 11.500H15" : "M5.500 0V22M11 11.500H15"} stroke="#999" strokeDasharray="1 1" />
                  {i > 0 && <path d="M.5 6.500H10.500V16.500H.5Z" fill="#fff" stroke="#666" />}
                  {i > 0 && <path d="M2.500 11.500H8.500M5.500 8.500V14.500" stroke="#1c2f6c" />}
                </Svg>
                <Folder w={16} h={13} />
                <TreeLabel $on={i === 7}>{t}</TreeLabel>
              </TreeItem>
            ))}
          </TreeList>
          <Splitter><Svg w={18} h={2}><path d="M0 1H18" stroke="#777" strokeWidth="2" strokeDasharray="2 2" /></Svg></Splitter>
          <SideHead>Detalles<Dash /></SideHead>
          <Fill />
          <Splitter />
          <SideHead>Vista preliminar</SideHead>
          <Fill $h={111} />
        </Side>
        <Canvas>
          <Paper>
            <Margins>
              <Viewport>
                <FloorPlan />
                <ViewLabel><button>[+]</button><button>[Superior]</button><button>[Estructura alámbrica 2D]</button></ViewLabel>
                <ViewCube>
                  <Compass />
                  <UcsPick>
                    <select aria-label="SCP" defaultValue="S-nombre"><option>S-nombre</option></select>
                    <Svg w={10} h={6}><path d="M1 .5H9L5 5Z" stroke="#999" /></Svg>
                  </UcsPick>
                </ViewCube>
                <NavBar>
                  <NavEnd $h={13} aria-label="Cerrar barra"><Svg w={9}><circle cx="4.500" cy="4.500" r="4" fill="#ddd" /><path d="M3 3L6 6M6 3L3 6" stroke="#fff" /></Svg></NavEnd>
                  {NAV.map(([t, h, line, icon]) => (
                    <NavBtn key={t} aria-label={t} $h={h} $line={line}>{icon}</NavBtn>
                  ))}
                  <NavEnd $h={20} aria-label="Opciones de barra"><Svg w={9}><circle cx="4.500" cy="4.500" r="4" fill="#ddd" /><path d="M2 3.500H7M2 5.500H7" stroke="#fff" /></Svg></NavEnd>
                </NavBar>
              </Viewport>
            </Margins>
          </Paper>
          <CommandLine onSubmit={e => e.preventDefault()}>
            <CommandTools>
              <Svg w={7} h={24}><path d="M1 0V24M5 0V24" stroke="#eee" strokeWidth="1.600" strokeDasharray="2 2" /></Svg>
              <Svg w={12}><path d="M1 1L11 11M11 1L1 11" stroke="#fff" strokeWidth="2.600" /></Svg>
              <Svg w={20}><path d="M8 9L17 18" stroke="#fff" strokeWidth="4" strokeLinecap="round" /><path d="M2 3L5 6L7 3L5 1C9 0 12 4 10 8C7 12 1 10 1 5Z" fill="#fff" /></Svg>
            </CommandTools>
            <Prompt type="button" aria-label="Órdenes recientes">
              <Svg w={19} h={18}><rect x=".5" y=".5" width="18" height="17" fill="#dfe3e8" stroke="#b4bac2" /><path d="M4 5L8 9L4 13M10 13H15" stroke="#555" strokeWidth="1.600" /></Svg>
              <Caret c="#888" w={8} />
            </Prompt>
            <CommandInput aria-label="Comando" placeholder="Escriba un comando" />
            <History type="button" aria-label="Historial"><Svg w={9} h={5}><path d="M0 5H9L4.500 0Z" fill="#111" /></Svg></History>
          </CommandLine>
        </Canvas>
      </Work>

      <StatusBar>
        <LayoutTabs aria-label="Presentaciones">
          <LayoutTab $w={93}>Modelo</LayoutTab>
          <LayoutTab $w={124}>Presentación1</LayoutTab>
          <LayoutTab $w={136} $on>Presentación2</LayoutTab>
          <AddLayout aria-label="Nueva presentación"><Plus /></AddLayout>
        </LayoutTabs>
        <StatusTools>
          <StatusBtn $w={74} $sep>MODELO</StatusBtn>
          {STATUS_A.map(([t, w, sep, icon]) => <StatusBtn key={t} aria-label={t} $w={w} $sep={sep}>{icon}</StatusBtn>)}
          <StatusPick $w={76} $pad={3} $size={13}><select aria-label="Escala" defaultValue="6.199156"><option>6.199156</option></select><Caret /></StatusPick>
          <StatusBtn $w={26} aria-label="Personalización"><Svg w={20}><path d="M0 0H20V20H0Z" fill="#3a78cc" /><path d="M3 3H16L12 8L19 17L15 20L9 11L3 16Z" fill="#2459ae" /></Svg></StatusBtn>
          <StatusBtn $w={30} aria-label="Espacio de trabajo"><Svg w={16}><circle cx="8" cy="8" r="4.500" stroke={G} strokeWidth="4" /><path d="M8 0V16M0 8H16M2.500 2.500L13.500 13.500M13.500 2.500L2.500 13.500" stroke={G} strokeWidth="2.200" /><circle cx="8" cy="8" r="2.500" fill="#e6e6e6" /></Svg></StatusBtn>
          <StatusBtn $w={19} $sep aria-label="Lista de espacios"><Caret /></StatusBtn>
          <StatusBtn $w={32} $sep aria-label="Monitor de anotaciones"><Svg w={18}><path d="M9 0V18M0 9H18" stroke={G} strokeWidth="2.400" /></Svg></StatusBtn>
          <StatusBtn $w={33} aria-label="Unidades"><Svg w={7} h={18}><path d="M0 0H7V18H0Z" fill={G} /><path d="M4 3H7M4 6H7M4 9H7M4 12H7M4 15H7" stroke="#ddd" /></Svg></StatusBtn>
          <StatusPick $w={92} $pad={6} $size={14} $sep><select aria-label="Formato de unidades" defaultValue="Decimal"><option>Decimal</option></select><Caret /></StatusPick>
          <StatusBtn $w={34} $sep aria-label="Gráficos"><Svg w={19}><circle cx="9.500" cy="9.500" r="9" fill="#1560b0" /><path d="M6 13L13 6" stroke="#3f8fe0" strokeWidth="2" /></Svg></StatusBtn>
          <StatusBtn $w={29} aria-label="Estado"><Svg w={20}><path d="M1 0H11L15 4V10H1Z" fill="#27415c" /><path d="M0 9H12V16H0Z" fill="#ecd21e" stroke="#8a7a10" /><path d="M8 14L12 18L19 10" stroke="#2c9a1c" strokeWidth="3" /><path d="M5 3H9V7H5Z" fill="#9fc4e4" /></Svg></StatusBtn>
          <StatusBtn $w={35} $sep aria-label="Aislar objetos"><Svg w={20}><path d="M1 1H8V8H1Z" stroke={G} strokeWidth="1.700" /><circle cx="15" cy="8" r="4" stroke={G} strokeWidth="1.700" /><path d="M7 12L11 18H3Z" stroke={G} strokeWidth="1.700" /></Svg></StatusBtn>
          <StatusBtn $w={34} aria-label="Pantalla limpia"><Svg w={20} h={16}><path d="M1 1H19V15H1Z" stroke={G} strokeWidth="1.700" /><path d="M11 7L16 3M12 3H16V7M9 9L4 13M4 9V13H8" stroke={G} strokeWidth="1.700" /></Svg></StatusBtn>
          <StatusBtn $w={29} aria-label="Personalizar"><Svg w={19} h={16}><path d="M0 2H19M0 8H19M0 14H19" stroke={G} strokeWidth="2.200" /></Svg></StatusBtn>
        </StatusTools>
      </StatusBar>

      <Taskbar>
        <Start aria-label="Inicio"><Svg w={21}><path d="M0 3L9 2V10H0ZM10 2L21 0V10H10ZM0 11H9V19L0 18ZM10 11H21V21L10 19Z" fill="#fff" /></Svg></Start>
        <TaskSearch>
          <Svg w={21}><circle cx="13" cy="8" r="7" stroke="#111" strokeWidth="1.600" /><path d="M8 13L1 20" stroke="#111" strokeWidth="1.600" /></Svg>
          <input aria-label="Buscar en Windows" placeholder="Escribe aquí para buscar" />
        </TaskSearch>
        {TASKS.map(([t, icon, open, active]) => <TaskApp key={t} aria-label={t} $open={open} $active={active}>{icon}</TaskApp>)}
        <Tray>
          <TrayBtn aria-label="Iconos ocultos"><Svg w={16} h={10}><path d="M1 9L8 1L15 9" stroke="#fff" strokeWidth="1.500" /></Svg></TrayBtn>
          <TrayBtn aria-label="Batería"><Svg w={20} h={14}><path d="M8 5H16V11H8Z" fill="#fff" /><path d="M2 0V3M5 0V3M0 3H6V6L3 8V13H18V3H8M19.500 6V10" stroke="#fff" strokeWidth="1.400" /></Svg></TrayBtn>
          <TrayBtn aria-label="Teclado"><Svg w={30} h={18}><path d="M.5 .5H29.500V17.500H.5Z" stroke="#fff" /><path d="M4 5H27M4 9H27" stroke="#fff" strokeWidth="1.500" strokeDasharray="1.500 2" /><path d="M8 13H22" stroke="#fff" strokeWidth="1.500" /></Svg></TrayBtn>
          <TrayBtn>ESP</TrayBtn>
          <Clock>04:14 p.m.<br />24/06/2020</Clock>
          <TrayBtn aria-label="Notificaciones"><Svg w={32} h={32}><path d="M0 2H20V18H13L8 23V18H0Z" fill="#fff" /><path d="M4 6H16M4 10H16M4 14H12" stroke="#22323f" strokeWidth="1.500" /><circle cx="20" cy="21" r="10.500" fill="#2e3438" stroke="#bbb" /><text x="20" y="26" textAnchor="middle" fontFamily="Open Sans, sans-serif" fontSize="14" fontWeight="600" fill="#fff">10</text></Svg></TrayBtn>
        </Tray>
      </Taskbar>
    </Shell>
  );
}
